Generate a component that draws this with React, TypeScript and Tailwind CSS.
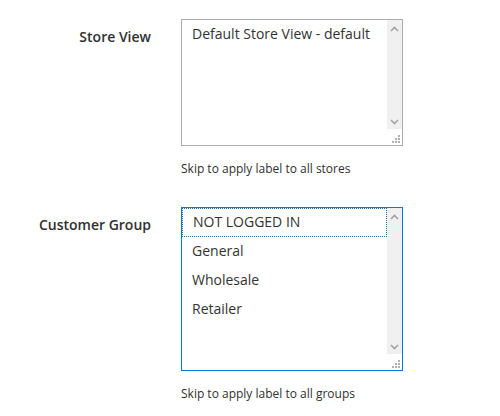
import type { ReactNode } from "react";

const font = { fontFamily: '"Open Sans", "Liberation Sans", sans-serif' };

function Chevron({ up }: { up?: boolean }) {
  return (
    <svg width="9" height="6" viewBox="0 0 9 6" className="block">
      <path
        d={up ? "M1 5 L4.5 1.5 L8 5" : "M1 1 L4.5 4.5 L8 1"}
        fill="none"
        stroke="#a3a3a3"
        strokeWidth="1.6"
      />
    </svg>
  );
}

function Grip() {
  return (
    <svg width="8" height="8" viewBox="0 0 8 8" className="block">
      <rect x="6" y="0" width="2" height="2" fill="#b0b0b0" />
      <rect x="3" y="3" width="2" height="2" fill="#b0b0b0" />
      <rect x="6" y="3" width="2" height="2" fill="#b0b0b0" />
      <rect x="0" y="6" width="2" height="2" fill="#b0b0b0" />
      <rect x="3" y="6" width="2" height="2" fill="#b0b0b0" />
      <rect x="6" y="6" width="2" height="2" fill="#b0b0b0" />
    </svg>
  );
}

type ListBoxProps = {
  options: string[];
  height: string;
  focused?: boolean;
};

function ListBox({ options, height, focused }: ListBoxProps) {
  return (
    <div
      className={`flex w-[222px] border bg-white ${height} ${
        focused ? "border-[#007bdb]" : "border-[#adadad]"
      }`}
    >
      <div className="flex-1 min-w-0">
        {options.map((option, i) => (
          <div
            key={option}
            className={`h-[29px] pl-[10px] text-[14px] leading-[20px] text-[#333] ${
              focused && i === 0
                ? "border border-dotted border-[#1a6fae] pl-[9px] pt-[3px]"
                : "pt-[4px]"
            }`}
          >
            {option}
          </div>
        ))}
      </div>
      <div className="flex w-[15px] flex-col">
        <div className="flex flex-1 flex-col items-center justify-between bg-[#f0f0f0] pb-[4px] pt-[6px]">
          <Chevron up />
          <Chevron />
        </div>
        <div className="flex h-[16px] items-end justify-end pb-[2px] pr-[2px]">
          <Grip />
        </div>
      </div>
    </div>
  );
}

type FieldProps = {
  label: string;
  hint: string;
  hintGap: string;
  children: ReactNode;
};

function Field({ label, hint, hintGap, children }: FieldProps) {
  return (
    <div className="flex">
      <div className="w-[151px] pt-[8px] text-right text-[14px] font-semibold leading-[20px] text-[#303030]">
        {label}
      </div>
      <div className="ml-[30px] flex flex-col">
        {children}
        <div className={`${hintGap} text-[12px] leading-[16px] text-[#303030]`}>
          {hint}
        </div>
      </div>
    </div>
  );
}

export default function App() {
  return (
    <div className="h-[416px] w-[500px] bg-white pt-[19px]" style={font}>
      <Field
        label="Store View"
        hint="Skip to apply label to all stores"
        hintGap="mt-[15px]"
      >
        <ListBox options={["Default Store View - default"]} height="h-[127px]" />
      </Field>
      <div className="h-[30px]" />
      <Field
        label="Customer Group"
        hint="Skip to apply label to all groups"
        hintGap="mt-[15px]"
      >
        <ListBox
          options={["NOT LOGGED IN", "General", "Wholesale", "Retailer"]}
          height="h-[164px]"
          focused
        />
      </Field>
    </div>
  );
}
